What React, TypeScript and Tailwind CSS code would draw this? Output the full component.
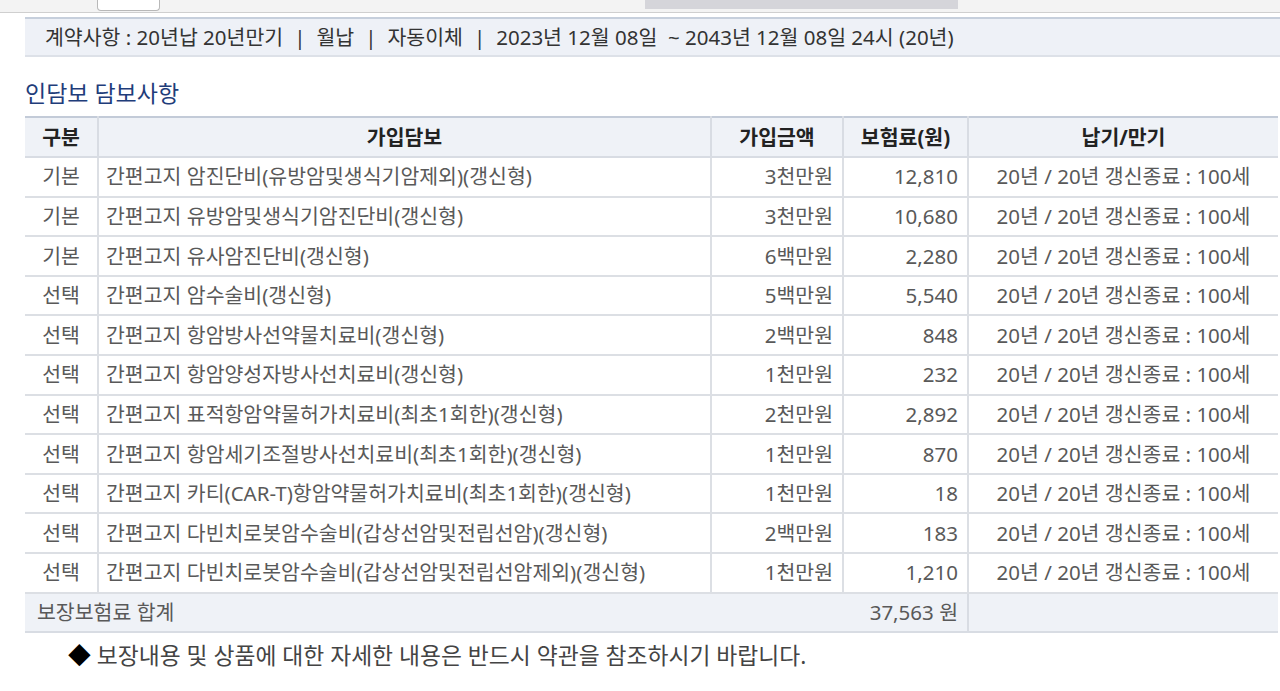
const rows = [
  { type: '기본', name: '간편고지 암진단비(유방암및생식기암제외)(갱신형)', amount: '3천만원', premium: '12,810' },
  { type: '기본', name: '간편고지 유방암및생식기암진단비(갱신형)', amount: '3천만원', premium: '10,680' },
  { type: '기본', name: '간편고지 유사암진단비(갱신형)', amount: '6백만원', premium: '2,280' },
  { type: '선택', name: '간편고지 암수술비(갱신형)', amount: '5백만원', premium: '5,540' },
  { type: '선택', name: '간편고지 항암방사선약물치료비(갱신형)', amount: '2백만원', premium: '848' },
  { type: '선택', name: '간편고지 항암양성자방사선치료비(갱신형)', amount: '1천만원', premium: '232' },
  { type: '선택', name: '간편고지 표적항암약물허가치료비(최초1회한)(갱신형)', amount: '2천만원', premium: '2,892' },
  { type: '선택', name: '간편고지 항암세기조절방사선치료비(최초1회한)(갱신형)', amount: '1천만원', premium: '870' },
  { type: '선택', name: '간편고지 카티(CAR-T)항암약물허가치료비(최초1회한)(갱신형)', amount: '1천만원', premium: '18' },
  { type: '선택', name: '간편고지 다빈치로봇암수술비(갑상선암및전립선암)(갱신형)', amount: '2백만원', premium: '183' },
  { type: '선택', name: '간편고지 다빈치로봇암수술비(갑상선암및전립선암제외)(갱신형)', amount: '1천만원', premium: '1,210' },
]

function Sep() {
  return <span className="mx-[11px]">|</span>
}

export default function App() {
  return (
    <div className="w-[1280px] h-[691px] overflow-hidden bg-white font-['Noto_Sans','Noto_Sans_CJK_KR',sans-serif]">
      {/* Top strip */}
      <div className="h-[13px] bg-[#f3f3f3] border-b border-[#cfcfcf] flex items-start">
        <div className="ml-[97px] w-[63px] h-[11px] bg-white border border-t-0 border-[#b8b8b8] rounded-b-[4px]" />
        <div className="ml-[485px] w-[313px] h-[9px] bg-[#d5d5da]" />
      </div>

      <div className="pl-[25px]">
        {/* Contract info */}
        <div className="mt-[4px] h-[40px] bg-[#eef1f7] border-t-2 border-b-2 border-t-[#c6cfdc] border-b-[#dde1e8] flex items-center pl-[20px] text-[20.5px] text-[#333] whitespace-nowrap">
          계약사항 : 20년납 20년만기<Sep />월납<Sep />자동이체<Sep />2023년 12월 08일&nbsp; ~ 2043년 12월 08일 24시 (20년)
        </div>

        {/* Title */}
        <h2 className="mt-[21px] h-[30px] leading-[30px] text-[23px] text-[#1f3d7a]">인담보 담보사항</h2>

        {/* Table */}
        <table className="mt-[8px] w-[1253px] border-collapse table-fixed text-[20.5px]">
          <colgroup>
            <col className="w-[73px]" />
            <col className="w-[613px]" />
            <col className="w-[132px]" />
            <col className="w-[125px]" />
            <col />
          </colgroup>
          <thead>
            <tr className="h-[40px] bg-[#eff2f7] border-t-2 border-[#c3cbd8] text-[#222] font-bold">
              <th className="border-b-2 border-[#d8dce3] text-center">구분</th>
              <th className="border-b-2 border-l-2 border-[#d8dce3] text-center">가입담보</th>
              <th className="border-b-2 border-l-2 border-[#d8dce3] text-center">가입금액</th>
              <th className="border-b-2 border-l-2 border-[#d8dce3] text-center">보험료(원)</th>
              <th className="border-b-2 border-l-2 border-[#d8dce3] text-center">납기/만기</th>
            </tr>
          </thead>
          <tbody className="text-[#595959]">
            {rows.map((r, i) => (
              <tr key={i} className="h-[39.6px]">
                <td className="border-b-2 border-[#dcdfe4] text-center">{r.type}</td>
                <td className="border-b-2 border-l-2 border-[#dcdfe4] pl-[7px] whitespace-nowrap">{r.name}</td>
                <td className="border-b-2 border-l-2 border-[#dcdfe4] text-right pr-[9px]">{r.amount}</td>
                <td className="border-b-2 border-l-2 border-[#dcdfe4] text-right pr-[9px]">{r.premium}</td>
                <td className="border-b-2 border-l-2 border-[#dcdfe4] text-center whitespace-nowrap">20년 / 20년 갱신종료 : 100세</td>
              </tr>
            ))}
            <tr className="h-[39.6px] bg-[#eff2f7]">
              <td colSpan={4} className="border-b-2 border-[#d8dce3] pl-[12px] pr-[9px]">
                <div className="flex justify-between">
                  <span>보장보험료 합계</span>
                  <span>37,563 원</span>
                </div>
              </td>
              <td className="border-b-2 border-l-2 border-[#d8dce3]" />
            </tr>
          </tbody>
        </table>

        {/* Note */}
        <p className="mt-[9px] pl-[43px] leading-[28px] text-[22.8px] text-[#444] whitespace-nowrap">
          <span className="text-black">◆</span> 보장내용 및 상품에 대한 자세한 내용은 반드시 약관을 참조하시기 바랍니다.
        </p>
      </div>
    </div>
  )
}
